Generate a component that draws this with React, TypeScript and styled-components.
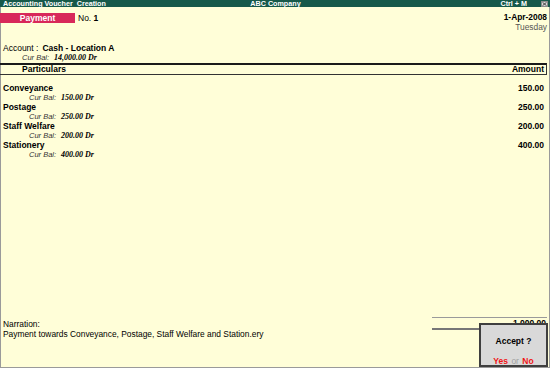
import React from "react";
import styled, { createGlobalStyle } from "styled-components";

const GlobalStyle = createGlobalStyle`
  html, body { margin: 0; padding: 0; }
  body {
    width: 550px;
    height: 368px;
    overflow: hidden;
    background: #fffed8;
    font-family: "Liberation Sans", Arial, sans-serif;
    color: #000;
  }
  #root { width: 550px; height: 368px; }
  * { box-sizing: border-box; }
`;

const Screen = styled.div`
  position: relative;
  width: 550px;
  height: 368px;
  display: flex;
  flex-direction: column;
  background: #fffed8;
`;

const TitleBar = styled.div`
  height: 7px;
  flex: 0 0 7px;
  background: #17594a;
  color: #fff;
  font-weight: bold;
  font-size: 7.2px;
  line-height: 7px;
  display: grid;
  grid-template-columns: 1fr auto 1fr;
  padding: 0 2px 0 3px;
  white-space: pre;
`;

const TitleRight = styled.div`
  display: flex;
  justify-content: flex-end;
  align-items: center;
  gap: 14px;
`;

const CloseBox = styled.span`
  display: inline-flex;
  width: 7px;
  height: 6px;
  background: #d6d6d6;
  border: 1px solid #8a8a8a;
  align-items: center;
  justify-content: center;
`;

const Body = styled.div`
  flex: 1;
  display: flex;
  flex-direction: column;
  border: 1px solid #9a9a9a;
  border-top: none;
  padding: 0 2px;
`;

const VoucherRow = styled.div`
  display: flex;
  justify-content: space-between;
  align-items: flex-start;
  padding-top: 5px;
`;

const VoucherLeft = styled.div`
  display: flex;
  align-items: center;
  gap: 3px;
  margin-top: 1px;
  margin-left: -3px;
  font-size: 8.5px;
  line-height: 10px;
`;

const Badge = styled.div`
  width: 75px;
  height: 10px;
  background: #d8285a;
  color: #fff;
  font-weight: bold;
  text-align: center;
  line-height: 10px;
`;

const DateBlock = styled.div`
  text-align: right;
  font-size: 8.4px;
  line-height: 10px;
`;

const DayText = styled.div`
  color: #555;
`;

const AccountBlock = styled.div`
  margin-top: 11px;
`;

const AccountLine = styled.div`
  display: flex;
  gap: 4px;
  font-size: 8.5px;
  line-height: 10px;
`;

const Bold = styled.span`
  font-weight: bold;
`;

const CurBalRow = styled.div<{ $indent: number }>`
  display: flex;
  align-items: baseline;
  gap: 5px;
  padding-left: ${(p) => p.$indent}px;
  line-height: 9.5px;
  height: 9.5px;
`;

const CurBalLabel = styled.span`
  font-style: italic;
  font-size: 7.5px;
  color: #333;
`;

const CurBalValue = styled.span`
  font-family: "Liberation Serif", "Times New Roman", serif;
  font-style: italic;
  font-weight: bold;
  font-size: 8px;
`;

const TableHeader = styled.div`
  margin-left: -3px;
  display: flex;
  justify-content: space-between;
  border-top: 2px solid #1a1a1a;
  border-bottom: 1px solid #333;
  border-right: 1px solid #333;
  padding: 0 2px 0 22px;
  font-weight: bold;
  font-size: 8.5px;
  line-height: 9px;
`;

const Entries = styled.div`
  padding-top: 9px;
`;

const EntryLine = styled.div`
  display: flex;
  justify-content: space-between;
  font-weight: bold;
  font-size: 8.5px;
  line-height: 9.5px;
  height: 9.5px;
`;

const Amount = styled.span`
  padding-right: 3px;
`;

const Footer = styled.div`
  margin-top: auto;
  display: flex;
  align-items: flex-start;
  padding-bottom: 28px;
`;

const Narration = styled.div`
  padding-top: 2px;
  font-size: 8.4px;
  line-height: 10px;
  white-space: nowrap;
`;

const Totals = styled.div`
  margin-left: auto;
  width: 115px;
  border-top: 1px solid #9a9a9a;
  border-bottom: 2px solid #777;
  text-align: right;
  padding-right: 1px;
  font-weight: bold;
  font-size: 8.5px;
  line-height: 10px;
`;

const AcceptBox = styled.div`
  position: absolute;
  right: 2px;
  bottom: 1px;
  width: 69px;
  height: 44px;
  border: 2px solid #3f3f3f;
  background: #d9d9d9;
  display: flex;
  flex-direction: column;
  align-items: center;
  padding-top: 11px;
  font-size: 8.5px;
  font-weight: bold;
`;

const AcceptTitle = styled.div`
  line-height: 10px;
`;

const Choices = styled.div`
  margin-top: 11px;
  line-height: 8px;
  word-spacing: 1px;
`;

const Choice = styled.span`
  color: #f01515;
`;

const Or = styled.span`
  color: #a0a0a0;
  font-weight: normal;
`;

const entries = [
  { name: "Conveyance", bal: "150.00 Dr", amount: "150.00" },
  { name: "Postage", bal: "250.00 Dr", amount: "250.00" },
  { name: "Staff Welfare", bal: "200.00 Dr", amount: "200.00" },
  { name: "Stationery", bal: "400.00 Dr", amount: "400.00" },
];

export default function App() {
  return (
    <>
      <GlobalStyle />
      <Screen>
        <TitleBar>
          <span>{"Accounting Voucher  Creation"}</span>
          <span>ABC Company</span>
          <TitleRight>
            <span>Ctrl + M</span>
            <CloseBox>
              <svg width="5" height="4" viewBox="0 0 5 4">
                <path d="M0.5 0.3 L4.5 3.7 M4.5 0.3 L0.5 3.7" stroke="#333" strokeWidth="0.9" />
              </svg>
            </CloseBox>
          </TitleRight>
        </TitleBar>
        <Body>
          <VoucherRow>
            <VoucherLeft>
              <Badge>Payment</Badge>
              <span>
                No. <Bold>1</Bold>
              </span>
            </VoucherLeft>
            <DateBlock>
              <Bold>1-Apr-2008</Bold>
              <DayText>Tuesday</DayText>
            </DateBlock>
          </VoucherRow>

          <AccountBlock>
            <AccountLine>
              <span>Account :</span>
              <Bold>Cash - Location A</Bold>
            </AccountLine>
            <CurBalRow $indent={19}>
              <CurBalLabel>Cur Bal:</CurBalLabel>
              <CurBalValue>14,000.00 Dr</CurBalValue>
            </CurBalRow>
          </AccountBlock>

          <TableHeader>
            <span>Particulars</span>
            <span>Amount</span>
          </TableHeader>

          <Entries>
            {entries.map((e) => (
              <div key={e.name}>
                <EntryLine>
                  <span>{e.name}</span>
                  <Amount>{e.amount}</Amount>
                </EntryLine>
                <CurBalRow $indent={26}>
                  <CurBalLabel>Cur Bal:</CurBalLabel>
                  <CurBalValue>{e.bal}</CurBalValue>
                </CurBalRow>
              </div>
            ))}
          </Entries>

          <Footer>
            <Narration>
              <div>Narration:</div>
              <div>Payment towards Conveyance, Postage, Staff Welfare and Station.ery</div>
            </Narration>
            <Totals>1,000.00</Totals>
          </Footer>
        </Body>
        <AcceptBox>
          <AcceptTitle>Accept ?</AcceptTitle>
          <Choices>
            <Choice>Yes</Choice> <Or>or</Or> <Choice>No</Choice>
          </Choices>
        </AcceptBox>
      </Screen>
    </>
  );
}
